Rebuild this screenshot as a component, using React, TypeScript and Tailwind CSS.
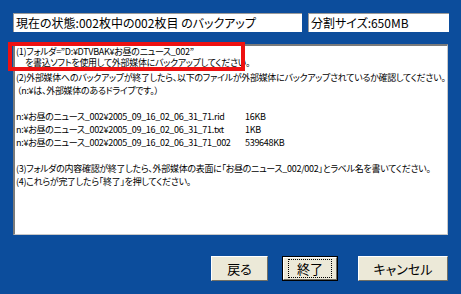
import React from "react";

const jp = { fontFamily: '"Noto Sans CJK JP", "Noto Sans", sans-serif', fontFeatureSettings: '"palt"' } as React.CSSProperties;
const body = { fontFamily: '"Liberation Sans Narrow", "Noto Sans CJK JP", sans-serif', fontFeatureSettings: '"palt"' } as React.CSSProperties;

function Btn({ label, w, def }: { label: string; w: string; def?: boolean }) {
  return (
    <div className={`${w} h-[25px] ${def ? "border border-black" : ""} bg-[#ece9d8]`}>
      <div className="h-full w-full border-t border-l border-t-white border-l-white border-b border-r border-b-[#716f64] border-r-[#716f64] flex items-center justify-center">
        <div className={`${def ? "border border-dotted border-black px-[8px]" : ""} text-[13px] leading-[17px] text-black`}>{label}</div>
      </div>
    </div>
  );
}

export default function App() {
  const files: [string, string][] = [
    ["n:¥お昼のニュース_002¥2005_09_16_02_06_31_71.rid", "16KB"],
    ["n:¥お昼のニュース_002¥2005_09_16_02_06_31_71.txt", "1KB"],
    ["n:¥お昼のニュース_002¥2005_09_16_02_06_31_71_002", "539648KB"],
  ];
  return (
    <div className="w-[461px] h-[294px] bg-[#0c4d9c] relative overflow-hidden" style={jp}>
      <div className="flex flex-col pl-[13px] pt-[13px]">
        <div className="flex gap-[6px]">
          <div className="w-[289px] h-[19px] bg-white border-t border-l border-[#9a9a9a] flex items-center pl-[2px] text-[12px] text-black whitespace-nowrap">
            現在の状態:002枚中の002枚目 のバックアップ
          </div>
          <div className="w-[141px] h-[19px] bg-white border-t border-l border-[#9a9a9a] flex items-center pl-[2px] text-[12px] text-black whitespace-nowrap">
            分割サイズ:650MB
          </div>
        </div>
        <div
          className="mt-[12px] w-[435px] h-[191px] bg-white border-l-2 border-t-2 border-l-[#7a7a7a] border-t-[#7a7a7a] border-r border-b border-r-[#c8c8c8] border-b-[#c8c8c8] pl-[1px] text-[9px] leading-[13px] tracking-[-0.3px] text-black whitespace-nowrap"
          style={body}
        >
          <div className="leading-[11px]">(1)フォルダ=”D:¥DTVBAK¥お昼のニュース_002”</div>
          <div className="leading-[11px] pl-[9px]">を書込ソフトを使用して外部媒体にバックアップしてください。</div>
          <div className="mt-[3px]">(2)外部媒体へのバックアップが終了したら、以下のファイルが外部媒体にバックアップされているか確認してください。</div>
          <div className="pl-[1px]">（n:¥は、外部媒体のあるドライブです。）</div>
          <div className="h-[13px]" />
          {files.map(([n, s]) => (
            <div key={n} className="flex">
              <div className="w-[229px]">{n}</div>
              <div>{s}</div>
            </div>
          ))}
          <div className="h-[13px]" />
          <div>(3)フォルダの内容確認が終了したら、外部媒体の表面に「お昼のニュース_002/002」とラベル名を書いてください。</div>
          <div>(4)これらが完了したら「終了」を押してください。</div>
        </div>
        <div className="mt-[21px] flex pl-[198px]">
          <Btn label="戻る" w="w-[57px]" />
          <div className="w-[14px]" />
          <Btn label="終了" w="w-[56px]" def />
          <div className="w-[20px]" />
          <Btn label="キャンセル" w="w-[90px]" />
        </div>
      </div>
      <div className="absolute left-[8px] top-[42px] w-[237px] h-[29px] border-4 border-[#ee1111]" />
    </div>
  );
}
